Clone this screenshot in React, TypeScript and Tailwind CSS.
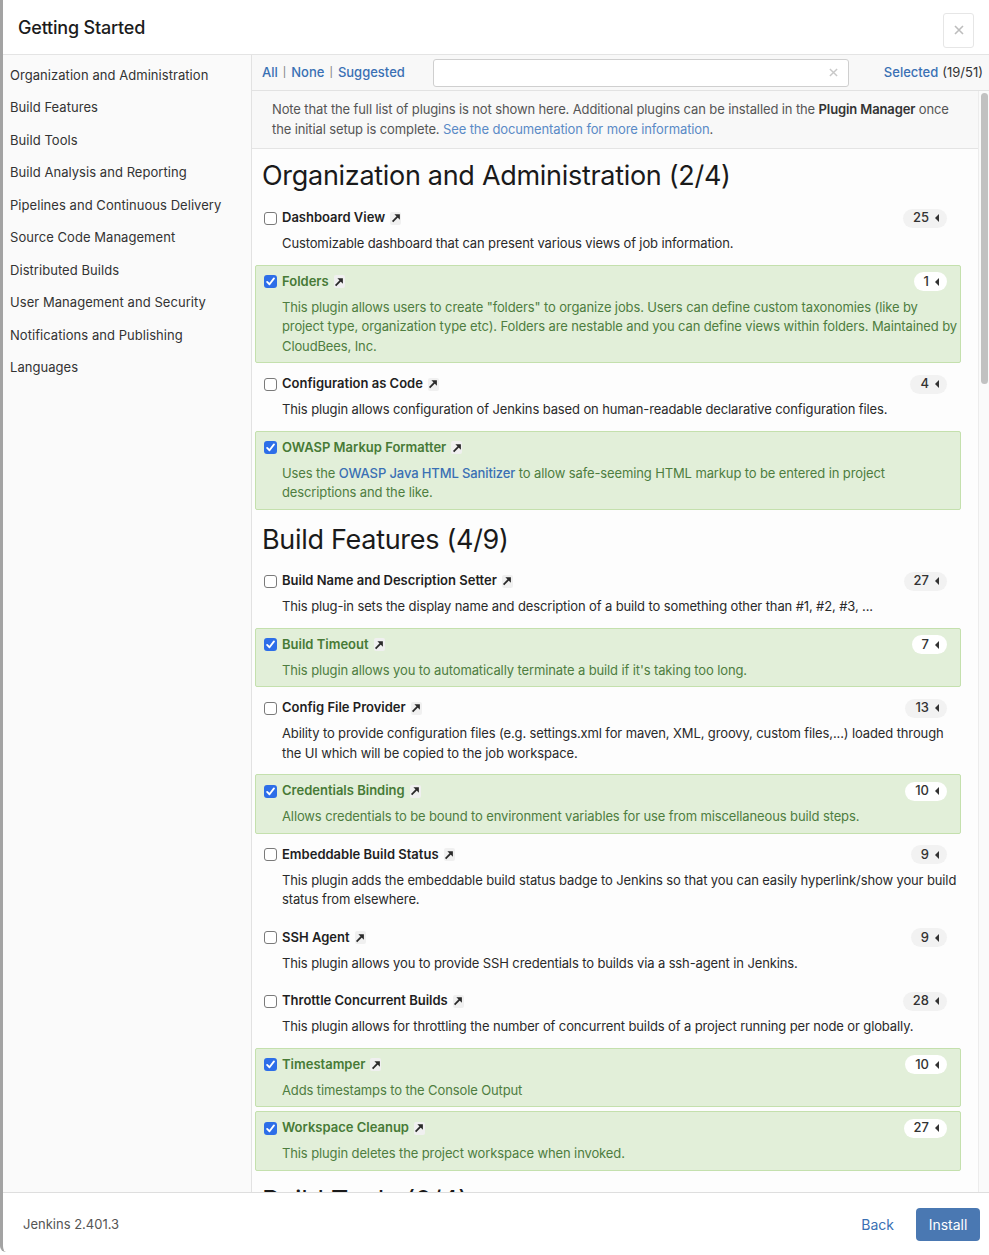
import type { ReactNode } from 'react';

interface Plugin {
  name: string;
  count: number;
  on: boolean;
  desc: ReactNode;
}

interface Section {
  title: string;
  plugins: Plugin[];
}

const CATEGORIES = [
  'Organization and Administration',
  'Build Features',
  'Build Tools',
  'Build Analysis and Reporting',
  'Pipelines and Continuous Delivery',
  'Source Code Management',
  'Distributed Builds',
  'User Management and Security',
  'Notifications and Publishing',
  'Languages',
];

const SECTIONS: Section[] = [
  {
    title: 'Organization and Administration (2/4)',
    plugins: [
      { name: 'Dashboard View', count: 25, on: false, desc: 'Customizable dashboard that can present various views of job information.' },
      {
        name: 'Folders',
        count: 1,
        on: true,
        desc: 'This plugin allows users to create "folders" to organize jobs. Users can define custom taxonomies (like by project type, organization type etc). Folders are nestable and you can define views within folders. Maintained by CloudBees, Inc.',
      },
      { name: 'Configuration as Code', count: 4, on: false, desc: 'This plugin allows configuration of Jenkins based on human-readable declarative configuration files.' },
      {
        name: 'OWASP Markup Formatter',
        count: 0,
        on: true,
        desc: (
          <>
            Uses the <span className="text-[#3a70b4] font-medium">OWASP Java HTML Sanitizer</span> to allow safe-seeming HTML markup to be entered in project descriptions and the like.
          </>
        ),
      },
    ],
  },
  {
    title: 'Build Features (4/9)',
    plugins: [
      { name: 'Build Name and Description Setter', count: 27, on: false, desc: 'This plug-in sets the display name and description of a build to something other than #1, #2, #3, ...' },
      { name: 'Build Timeout', count: 7, on: true, desc: "This plugin allows you to automatically terminate a build if it's taking too long." },
      {
        name: 'Config File Provider',
        count: 13,
        on: false,
        desc: 'Ability to provide configuration files (e.g. settings.xml for maven, XML, groovy, custom files,...) loaded through the UI which will be copied to the job workspace.',
      },
      { name: 'Credentials Binding', count: 10, on: true, desc: 'Allows credentials to be bound to environment variables for use from miscellaneous build steps.' },
      {
        name: 'Embeddable Build Status',
        count: 9,
        on: false,
        desc: 'This plugin adds the embeddable build status badge to Jenkins so that you can easily hyperlink/show your build status from elsewhere.',
      },
      { name: 'SSH Agent', count: 9, on: false, desc: 'This plugin allows you to provide SSH credentials to builds via a ssh-agent in Jenkins.' },
      { name: 'Throttle Concurrent Builds', count: 28, on: false, desc: 'This plugin allows for throttling the number of concurrent builds of a project running per node or globally.' },
      { name: 'Timestamper', count: 10, on: true, desc: 'Adds timestamps to the Console Output' },
      { name: 'Workspace Cleanup', count: 27, on: true, desc: 'This plugin deletes the project workspace when invoked.' },
    ],
  },
  { title: 'Build Tools (0/4)', plugins: [] },
];

function Checkbox({ on }: { on: boolean }) {
  if (on) {
    return (
      <span className="w-[13px] h-[13px] shrink-0 rounded-[3px] bg-[#2d6ee8] flex items-center justify-center">
        <svg viewBox="0 0 12 12" className="w-[11px] h-[11px]">
          <path d="M2.3 6.4 L4.9 9 L9.8 2.6" stroke="white" strokeWidth="2" fill="none" strokeLinecap="round" strokeLinejoin="round" />
        </svg>
      </span>
    );
  }
  return <span className="w-[13px] h-[13px] shrink-0 rounded-[3px] border border-[#7a7a7a] bg-white" />;
}

function ExtLink() {
  return (
    <span className="ml-[5px] w-[11px] h-[13px] bg-[#f0f0f0] rounded-[2px] flex items-center justify-center">
      <svg viewBox="0 0 10 10" className="w-[10px] h-[10px]">
        <path d="M1.6 8.6 L7 3.2" stroke="#2a2a2a" strokeWidth="1.8" />
        <path d="M3.4 1.3 H8.9 V6.8 Z" fill="#2a2a2a" />
      </svg>
    </span>
  );
}

function Badge({ count, on }: { count: number; on: boolean }) {
  return (
    <span
      className={`h-[19px] rounded-full pl-[10px] pr-[8px] flex items-center gap-[6px] text-[13px] font-medium text-[#333] ${
        on ? 'bg-white' : 'bg-[#f2f2f2]'
      }`}
    >
      {count}
      <svg viewBox="0 0 4 8" className="w-[4px] h-[8px]">
        <path d="M4 0 V8 L0 4 Z" fill="#333" />
      </svg>
    </span>
  );
}

function PluginRow({ p }: { p: Plugin }) {
  return (
    <div
      className={`mb-[4px] border rounded-[2px] pt-[6px] pb-[6px] pl-[8px] pr-[13px] ${
        p.on ? 'bg-[#e2efd9] border-[#c4e0ad]' : 'border-transparent'
      }`}
    >
      <div className="h-[20px] flex items-center">
        <Checkbox on={p.on} />
        <span className={`ml-[5px] text-[13px] font-semibold ${p.on ? 'text-[#477a36]' : 'text-[#1f1f1f]'}`}>{p.name}</span>
        <ExtLink />
        <span className="flex-1" />
        {p.count > 0 && <Badge count={p.count} on={p.on} />}
      </div>
      <p
        className={`mt-[6px] pl-[18px] -mr-[12px] text-[13px] leading-[19.5px] tracking-[-0.12px] ${
          p.on ? 'text-[#4e7d40]' : 'text-[#2a2a2a]'
        }`}
      >
        {p.desc}
      </p>
    </div>
  );
}

export default function App() {
  return (
    <div className="w-[989px] h-[1255px] bg-white font-['Inter',sans-serif] text-[#333] overflow-hidden">
      <div className="h-[1252px] border-l-[3px] border-[#a3a3a3] rounded-bl-[6px] flex flex-col">
        {/* Header */}
        <div className="h-[55px] shrink-0 border-b border-[#e4e4e4] flex items-center pl-[15px] pr-[15px]">
          <h1 className="text-[18px] font-medium tracking-[-0.2px] text-[#1c1c1c]">Getting Started</h1>
          <span className="flex-1" />
          <button className="w-[31px] h-[35px] mt-[6px] border border-[#e6e6e6] rounded-[3px] flex items-center justify-center">
            <svg viewBox="0 0 10 10" className="w-[10px] h-[10px]">
              <path d="M1 1 L9 9 M9 1 L1 9" stroke="#bdbdbd" strokeWidth="1.6" />
            </svg>
          </button>
        </div>

        {/* Body */}
        <div className="flex-1 min-h-0 flex">
          <nav className="w-[249px] shrink-0 bg-[#fafafa] border-r border-[#e2e2e2] pt-[4px]">
            {CATEGORIES.map((c) => (
              <div key={c} className="h-[32.5px] flex items-center pl-[7px] text-[13px] tracking-[0.05px] text-[#333]">
                {c}
              </div>
            ))}
          </nav>

          <div className="flex-1 min-w-0 flex flex-col">
            {/* Toolbar */}
            <div className="h-[36px] shrink-0 border-b border-[#e2e2e2] bg-[#f8f8f8] flex items-center pl-[10px] pr-[6px] text-[13px]">
              <div className="flex items-center text-[#3a70b4] font-medium">
                <span>All</span>
                <span className="mx-[5px] text-[10px] text-[#8a8a8a]">|</span>
                <span>None</span>
                <span className="mx-[5px] text-[10px] text-[#8a8a8a]">|</span>
                <span>Suggested</span>
              </div>
              <div className="ml-[28px] w-[416px] h-[28px] border border-[#cfcfcf] rounded-[3px] bg-white flex items-center justify-end pr-[10px]">
                <svg viewBox="0 0 10 10" className="w-[9px] h-[9px]">
                  <path d="M1 1 L9 9 M9 1 L1 9" stroke="#c8c8c8" strokeWidth="1.6" />
                </svg>
              </div>
              <span className="flex-1" />
              <span className="text-[#3a70b4] font-medium">Selected</span>
              <span className="ml-[4px] text-[#333]">(19/51)</span>
            </div>

            {/* Content */}
            <div className="flex-1 min-h-0 flex">
              <div className="flex-1 min-w-0 overflow-hidden bg-[#fdfdfd]">
                <div className="bg-[#f8f8f8] border-b border-[#e4e4e4] pl-[20px] pr-[14px] pt-[8px] pb-[9px] text-[13px] leading-[20px] tracking-[-0.12px] text-[#555]">
                  Note that the full list of plugins is not shown here. Additional plugins can be installed in the{' '}
                  <b className="font-semibold text-[#333]">Plugin Manager</b> once the initial setup is complete.{' '}
                  <span className="text-[#5a8ac6]">See the documentation for more information</span>.
                </div>
                <div className="pl-[3px] pr-[17px]">
                  {SECTIONS.map((s, i) => (
                    <div key={s.title}>
                      <h2
                        className={`${i === 0 ? 'pt-[10px] pb-[8px]' : 'pt-[9.5px] pb-[7px]'} pl-[7px] text-[27px] leading-[34px] tracking-[-0.3px] text-[#1a1a1a]`}
                      >
                        {s.title}
                      </h2>
                      {s.plugins.map((p) => (
                        <PluginRow key={p.name} p={p} />
                      ))}
                    </div>
                  ))}
                </div>
              </div>
              <div className="w-[11px] shrink-0 bg-[#fafafa] border-l border-[#ececec] pt-[2px]">
                <div className="mx-auto w-[7px] h-[291px] rounded-full bg-[#c1c1c1]" />
              </div>
            </div>
          </div>
        </div>

        {/* Footer */}
        <div className="h-[60px] shrink-0 border-t border-[#dedede] flex items-center pl-[20px] pr-[9px]">
          <span className="text-[13px] text-[#555] mt-[4px]">Jenkins 2.401.3</span>
          <span className="flex-1" />
          <span className="text-[14px] text-[#3a70b4] mt-[4px]">Back</span>
          <button className="ml-[22px] w-[64px] h-[33px] mt-[4px] rounded-[4px] bg-[#4a78b2] text-white text-[14px]">Install</button>
        </div>
      </div>
    </div>
  );
}
